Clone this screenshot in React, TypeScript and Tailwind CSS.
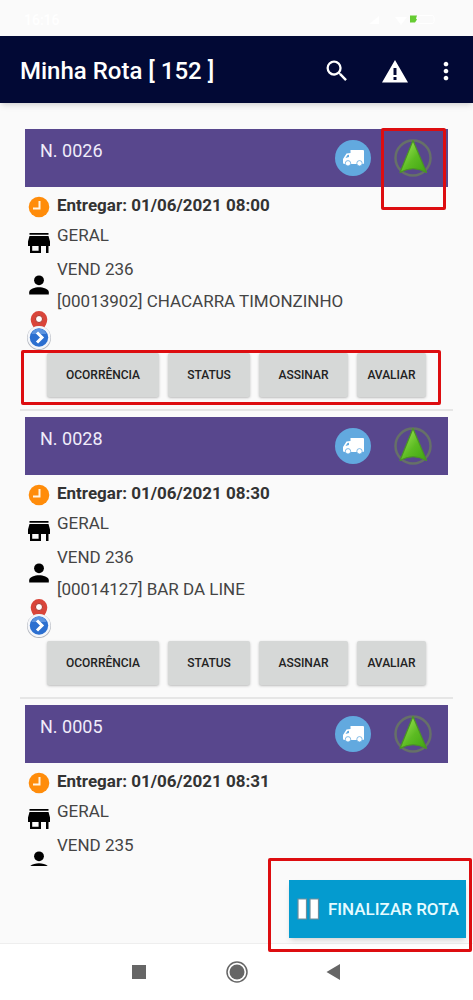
import type { ReactNode } from 'react'
import { MdMoreVert, MdSearch } from 'react-icons/md'

interface Delivery {
  id: string
  date: string
  group: string
  seller: string
  customer?: string
}

const deliveries: Delivery[] = [
  { id: '0026', date: '01/06/2021 08:00', group: 'GERAL', seller: 'VEND 236', customer: '[00013902] CHACARRA TIMONZINHO' },
  { id: '0028', date: '01/06/2021 08:30', group: 'GERAL', seller: 'VEND 236', customer: '[00014127] BAR DA LINE' },
  { id: '0005', date: '01/06/2021 08:31', group: 'GERAL', seller: 'VEND 235' },
]

function StatusBar() {
  return (
    <div className="flex h-9 shrink-0 items-center justify-between pt-1 pl-6 pr-4 text-sm font-medium text-white">
      <span>16:16</span>
      <svg className="h-3 w-28" viewBox="0 0 112 12" aria-hidden="true">
        <path d="M24 10l10-8v8zM50 3h12l-6 8z" fill="#fff" />
        <rect x="72" y="1.500" width="17" height="8" rx="2" fill="none" stroke="#fff" />
        <path d="M65 1.500h7l-1 3 1 1-2 3h-5z" fill="#6c3" />
      </svg>
    </div>
  )
}

function WarningIcon() {
  return (
    <svg className="size-7" viewBox="0 0 28 28" fill="currentColor" aria-hidden="true">
      <path d="M14 3L1 25.500h26zM12.500 11h3v7h-3zM12.500 20h3v3h-3z" fillRule="evenodd" />
    </svg>
  )
}

function ClockIcon() {
  return (
    <svg className="size-6" viewBox="0 0 24 24" aria-hidden="true">
      <circle cx="12" cy="12" r="10.300" fill="#ff8c0a" />
      <path d="M12.500 6v7.500H6" fill="none" stroke="#fff3e2" strokeWidth="2" />
    </svg>
  )
}

function StoreIcon() {
  return (
    <svg className="size-7" viewBox="0 0 28 28" aria-hidden="true">
      <path d="M4.500 4h19v1.800h-19zM4.500 7h19L25 12.500V17h-1.500v7H21v-7h-5v7H5v-7H3v-4.500zM7.200 17v4.800h6.400V17z" fillRule="evenodd" />
    </svg>
  )
}

function PersonIcon() {
  return (
    <svg className="size-7" viewBox="0 0 28 28" aria-hidden="true">
      <circle cx="14" cy="9.300" r="4.900" />
      <path d="M4.200 23.500v-2.300C4.200 18 10 16.200 14 16.200s9.800 1.800 9.800 5v2.300z" />
    </svg>
  )
}

function TruckIcon() {
  return (
    <svg className="size-9" viewBox="0 0 36 36" aria-hidden="true">
      <circle cx="18" cy="18" r="18" fill="#62a9df" />
      <path d="M15.500 10H28q1 0 1 1v12q0 1-1 1H9.500Q8 24 8 22.500V19l3.500-5.500 4-.5z" fill="#fff" />
      <path d="M10.500 18l2-3 1.500-.2V17z" fill="#62a9df" />
      <circle cx="13" cy="23.300" r="2.700" fill="#fff" stroke="#62a9df" strokeWidth="0.800" />
      <circle cx="24.500" cy="23.300" r="2.700" fill="#fff" stroke="#62a9df" strokeWidth="0.800" />
    </svg>
  )
}

function NavigateIcon() {
  return (
    <svg className="size-10" viewBox="0 0 40 40" aria-hidden="true">
      <defs>
        <linearGradient id="arrow" x1="0" y1="0" x2="1" y2="1">
          <stop offset="0.200" stopColor="#8fdc4a" />
          <stop offset="0.550" stopColor="#5cbb22" />
          <stop offset="1" stopColor="#3fa512" />
        </linearGradient>
      </defs>
      <circle cx="20" cy="20" r="17.500" fill="none" stroke="#667068" strokeWidth="2.500" />
      <path d="M20 2.500L33.500 34.500Q20 27 7 34.500z" fill="url(#arrow)" stroke="#4a9424" strokeWidth="1.200" strokeLinejoin="round" />
    </svg>
  )
}

function RouteIcon() {
  return (
    <svg className="h-10 w-7" viewBox="0 0 28 40" aria-hidden="true">
      <path d="M14 0a8.300 8.300 0 0 1 8.300 8.300c0 4-2.300 7-4.300 10h-8c-2-3-4.300-6-4.300-10A8.300 8.300 0 0 1 14 0z" fill="#d9453a" />
      <circle cx="14" cy="8" r="3.500" fill="#fff" stroke="#a8332b" />
      <circle cx="14" cy="27" r="12" fill="#aeb2ba" />
      <circle cx="14" cy="26.500" r="11.500" fill="#f4f6fa" />
      <circle cx="14" cy="26.500" r="9.200" fill="#2b6fd0" />
      <path d="M6.500 23a8 8 0 0 1 15 0z" fill="#5c94e0" />
      <path d="M12 21.500l5 5-5 5" fill="none" stroke="#fff" strokeWidth="3" />
    </svg>
  )
}

/* Red frame around the controls explained in the manual */
function Highlight({ className }: { className: string }) {
  return <div className={`pointer-events-none absolute z-10 rounded-xs border-3 border-[#dd0d10] ${className}`} />
}

function ActionButton({ className, children }: { className: string; children: ReactNode }) {
  return (
    <button className={`h-11 rounded-xs bg-[#d6d8d7] text-xs font-medium text-[#222] shadow-sm shadow-black/20 ${className}`}>
      {children}
    </button>
  )
}

function DeliveryCard({ delivery, highlighted }: { delivery: Delivery; highlighted: boolean }) {
  return (
    <li className="mx-5 mb-1.5 border-b-2 border-[#e6e6e6]">
      <div className="relative mx-[5px] flex h-[58px] justify-between bg-[#58478d] pr-[15px] pl-[15px]">
        <h2 className="pt-2 text-lg text-[#f0ecfa]">N. {delivery.id}</h2>
        <div className="flex items-center gap-[22px]">
          <TruckIcon />
          <button aria-label="Navegar">
            <NavigateIcon />
          </button>
        </div>
        {highlighted && <Highlight className="-top-px right-0.5 h-[82px] w-[65px]" />}
      </div>

      <div className="flex h-[163px] gap-1 pl-[5px]">
        <div className="flex w-7 flex-col items-center">
          <div className="mt-2">
            <ClockIcon />
          </div>
          <div className="mt-2.5">
            <StoreIcon />
          </div>
          <div className="mt-3.5">
            <PersonIcon />
          </div>
          {delivery.customer && (
            <div className="mt-3">
              <RouteIcon />
            </div>
          )}
        </div>
        <div className="text-[17px] leading-6 text-[#444]">
          <p className="mt-1.5 font-bold text-[#333]">Entregar: {delivery.date}</p>
          <p className="mt-1.5">{delivery.group}</p>
          <p className="mt-2.5">{delivery.seller}</p>
          {delivery.customer && <p className="mt-2">{delivery.customer}</p>}
        </div>
      </div>

      {delivery.customer && (
        <div className="relative flex gap-[9px] pt-[3px] pb-3 pl-[27px]">
          <ActionButton className="w-28">OCORRÊNCIA</ActionButton>
          <ActionButton className="w-[82px]">STATUS</ActionButton>
          <ActionButton className="w-[89px]">ASSINAR</ActionButton>
          <ActionButton className="w-[69px]">AVALIAR</ActionButton>
          {highlighted && <Highlight className="top-0 right-3 left-px h-[55px]" />}
        </div>
      )}
    </li>
  )
}

export default function App() {
  return (
    <div className="flex h-screen flex-col bg-[#fafafa] font-[Roboto,sans-serif]">
      <StatusBar />

      <header className="z-10 flex h-[67px] shrink-0 items-center bg-[#020935] pt-0.5 pr-[13px] pl-5 text-white shadow-md">
        <h1 className="flex-1 text-2xl font-medium">Minha Rota [ 152 ]</h1>
        <button aria-label="Buscar" className="mr-[30px]">
          <MdSearch className="size-7" />
        </button>
        <button aria-label="Alertas" className="mr-[23px]">
          <WarningIcon />
        </button>
        <button aria-label="Mais opções">
          <MdMoreVert className="size-7" />
        </button>
      </header>

      <ul className="min-h-0 flex-1 overflow-y-auto pt-[26px] [scrollbar-width:none]">
        {deliveries.map((delivery, index) => (
          <DeliveryCard key={delivery.id} delivery={delivery} highlighted={index === 0} />
        ))}
      </ul>

      <div className="flex h-[77px] shrink-0 justify-end pt-3.5 pr-[7px]">
        <div className="relative">
          <button className="flex h-[58px] items-center gap-2 bg-[#049bcf] px-[7px] text-[17px] font-medium text-[#e6fbff] shadow-md">
            <svg className="size-6" viewBox="0 0 24 24" aria-hidden="true">
              <path d="M2 2h8.500v20H2zM14 2h8.500v20h-8.500z" fill="#fff" stroke="#6e8e9c" strokeWidth="1.200" />
            </svg>
            <span className="pt-0.5">FINALIZAR ROTA</span>
          </button>
          <Highlight className="-top-[22px] -right-1.5 h-[94px] w-[204px]" />
        </div>
      </div>

      <nav className="flex h-[57px] shrink-0 items-center justify-center gap-[74px] border-t border-[#eee] bg-white text-[#666]">
        <button aria-label="Recentes">
          <svg className="size-6" viewBox="0 0 24 24" fill="currentColor">
            <rect x="5" y="5" width="14" height="14" />
          </svg>
        </button>
        <button aria-label="Início">
          <svg className="size-6" viewBox="0 0 24 24" fill="currentColor">
            <circle cx="12" cy="12" r="10" fill="none" stroke="currentColor" strokeWidth="1.500" />
            <circle cx="12" cy="12" r="7.500" />
          </svg>
        </button>
        <button aria-label="Voltar">
          <svg className="size-6" viewBox="0 0 24 24" fill="currentColor">
            <path d="M3.500 12L17 4v16z" />
          </svg>
        </button>
      </nav>
    </div>
  )
}
